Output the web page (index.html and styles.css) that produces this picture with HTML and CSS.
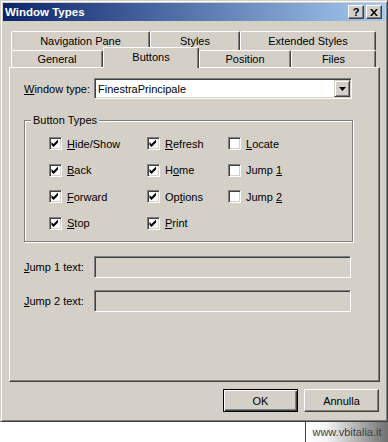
FILE: index.html
```html
<!DOCTYPE html>
<html lang="en">
<head>
    <meta charset="UTF-8">
    <title>Window Types</title>
    <link rel="stylesheet" href="styles.css">
</head>
<body>
    <div class="dialog">
        <div class="titlebar">
            <span class="title">Window Types</span>
            <span class="tb-btn help">?</span>
            <span class="tb-btn close">
                <svg width="8" height="7" viewBox="0 0 8 7"><path d="M0 0h2l2 2.5 2-2.5h2l-3 3.5 3 3.5h-2l-2-2.5-2 2.5h-2l3-3.5z" fill="#000"/></svg>
            </span>
        </div>

        <div class="content">
            <div class="tabrow back">
                <div class="tab w139">Navigation Pane</div>
                <div class="tab w90">Styles</div>
                <div class="tab w136">Extended Styles</div>
            </div>
            <div class="tabrow front">
                <div class="tab w92">General</div>
                <div class="tab w96 active">Buttons</div>
                <div class="tab w92">Position</div>
                <div class="tab w85">Files</div>
            </div>

            <div class="panel">
                <div class="field-row">
                    <span class="label"><u>W</u>indow type:</span>
                    <div class="combo">
                        <span class="combo-text">FinestraPrincipale</span>
                        <span class="drop">
                            <svg width="7" height="4" viewBox="0 0 7 4"><path d="M0 0h7l-3.5 4z" fill="#000"/></svg>
                        </span>
                    </div>
                </div>

                <div class="groupbox">
                    <span class="legend">Button Types</span>
                    <div class="checks">
                        <label class="check"><span class="box on"></span><span><u>H</u>ide/Show</span></label>
                        <label class="check"><span class="box on"></span><span><u>R</u>efresh</span></label>
                        <label class="check"><span class="box"></span><span><u>L</u>ocate</span></label>

                        <label class="check"><span class="box on"></span><span><u>B</u>ack</span></label>
                        <label class="check"><span class="box on"></span><span>H<u>o</u>me</span></label>
                        <label class="check"><span class="box"></span><span>Jump <u>1</u></span></label>

                        <label class="check"><span class="box on"></span><span><u>F</u>orward</span></label>
                        <label class="check"><span class="box on"></span><span>Op<u>t</u>ions</span></label>
                        <label class="check"><span class="box"></span><span>Jump <u>2</u></span></label>

                        <label class="check"><span class="box on"></span><span><u>S</u>top</span></label>
                        <label class="check"><span class="box on"></span><span><u>P</u>rint</span></label>
                    </div>
                </div>

                <div class="field-row jump first">
                    <span class="label"><u>J</u>ump 1 text:</span>
                    <div class="textbox"></div>
                </div>
                <div class="field-row jump">
                    <span class="label"><u>J</u>ump 2 text:</span>
                    <div class="textbox"></div>
                </div>
            </div>

            <div class="buttons">
                <div class="btn default">OK</div>
                <div class="btn">Annulla</div>
            </div>
        </div>
    </div>
    <div class="footer">
        <div class="watermark">www.vbitalia.it</div>
    </div>
</body>
</html>
```

FILE: styles.css
```css
* {
    box-sizing: border-box;
}
body {
    margin: 0;
    background-color: #ffffff;
    font-family: "Liberation Sans", Arial, sans-serif;
    font-size: 11px;
    color: #000;
}
u {
    text-decoration-thickness: 1px;
    text-underline-offset: 1px;
}
.dialog {
    width: 388px;
    height: 422px;
    background-color: #d4d0c8;
    border: 1px solid;
    border-color: #d4d0c8 #404040 #404040 #d4d0c8;
    box-shadow: inset 1px 1px #ffffff, inset -1px -1px #808080;
    padding: 2px;
}
.titlebar {
    height: 18px;
    display: flex;
    align-items: center;
    padding: 0 3px 0 2px;
    background: linear-gradient(to right, #0a246a, #a6caf0);
    color: #ffffff;
}
.title {
    flex: 1;
    font-weight: bold;
    font-size: 11.5px;
}
.tb-btn {
    width: 16px;
    height: 14px;
    display: flex;
    align-items: center;
    justify-content: center;
    background-color: #d4d0c8;
    border: 1px solid;
    border-color: #ffffff #404040 #404040 #ffffff;
    box-shadow: inset -1px -1px #808080;
    color: #000;
    font-weight: bold;
    font-size: 11px;
}
.close {
    margin-left: 2px;
}
.content {
    margin: 10px 5px 0 6px;
}
.tabrow {
    display: flex;
    margin-left: 2px;
}
.tabrow.back {
    height: 19px;
}
.tabrow.front {
    height: 17px;
}
.tab {
    height: 100%;
    display: flex;
    align-items: center;
    justify-content: center;
    border: 1px solid;
    border-bottom: 0;
    border-color: #ffffff #404040 transparent #ffffff;
    border-radius: 2px 2px 0 0;
    box-shadow: inset -1px 0 #808080;
    background-color: #d4d0c8;
}
.tab.active {
    height: 21px;
    margin-top: -3px;
    padding-bottom: 3px;
    position: relative;
    z-index: 2;
}
.w139 { width: 139px; }
.w90 { width: 90px; }
.w136 { width: 136px; }
.w92 { width: 92px; }
.w96 { width: 96px; }
.w85 { width: 85px; }
.panel {
    height: 315px;
    border: 1px solid;
    border-color: #ffffff #404040 #404040 #ffffff;
    box-shadow: inset -1px -1px #808080;
    padding: 10px 0 0 14px;
}
.field-row {
    display: flex;
    align-items: center;
    height: 21px;
}
.label {
    width: 70px;
}
.combo {
    width: 258px;
    height: 21px;
    display: flex;
    align-items: center;
    background-color: #ffffff;
    border: 1px solid;
    border-color: #808080 #ffffff #ffffff #808080;
    box-shadow: inset 1px 1px #404040, inset -1px -1px #d4d0c8;
    padding: 0 1px 0 3px;
}
.combo-text {
    flex: 1;
}
.drop {
    width: 16px;
    height: 17px;
    display: flex;
    align-items: center;
    justify-content: center;
    background-color: #d4d0c8;
    border: 1px solid;
    border-color: #d4d0c8 #404040 #404040 #d4d0c8;
    box-shadow: inset 1px 1px #ffffff, inset -1px -1px #808080;
}
.groupbox {
    position: relative;
    width: 329px;
    height: 122px;
    margin-top: 21px;
    border: 1px solid #808080;
    box-shadow: inset 1px 1px #ffffff, 1px 1px #ffffff;
    padding: 16px 0 0 24px;
}
.legend {
    position: absolute;
    top: -7px;
    left: 6px;
    padding: 0 2px;
    line-height: 13px;
    background-color: #d4d0c8;
}
.checks {
    display: grid;
    grid-template-columns: 98px 81px auto;
    grid-auto-rows: 13px;
    row-gap: 13.5px;
}
.check {
    display: flex;
    align-items: center;
    gap: 5px;
}
.box {
    width: 13px;
    height: 13px;
    flex: none;
    background-color: #ffffff;
    border: 1px solid;
    border-color: #808080 #ffffff #ffffff #808080;
    box-shadow: inset 1px 1px #404040, inset -1px -1px #d4d0c8;
}
.box.on {
    background: #ffffff url("data:image/svg+xml;utf8,<svg xmlns='http://www.w3.org/2000/svg' width='11' height='11' viewBox='0 0 11 11'><path d='M1.5 4l2 2 4.5-4.5v3l-4.5 4.5-2-2z' fill='black'/></svg>") no-repeat 0 0;
}
.jump {
    height: 22px;
    margin-top: 14px;
}
.jump + .jump {
    margin-top: 12px;
}
.textbox {
    width: 257px;
    height: 22px;
    background-color: #d4d0c8;
    border: 1px solid;
    border-color: #808080 #ffffff #ffffff #808080;
    box-shadow: inset 1px 1px #404040, inset -1px -1px #d4d0c8;
}
.buttons {
    display: flex;
    justify-content: flex-end;
    gap: 6px;
    margin-top: 7px;
    padding-right: 1px;
}
.btn {
    width: 75px;
    height: 23px;
    display: flex;
    align-items: center;
    justify-content: center;
    border: 1px solid;
    border-color: #ffffff #404040 #404040 #ffffff;
    box-shadow: inset -1px -1px #808080;
}
.btn.default {
    border-color: #000;
    box-shadow: inset 1px 1px #ffffff, inset -1px -1px #404040, inset -2px -2px #808080;
}
.footer {
    display: flex;
    justify-content: flex-end;
}
.watermark {
    width: 83px;
    height: 20px;
    display: flex;
    align-items: center;
    justify-content: center;
    background: linear-gradient(to right, #ffffff, #f4f4f4 25%, #707070);
    border-left: 1px solid #404040;
    color: #404040;
    font-size: 11px;
}
```
